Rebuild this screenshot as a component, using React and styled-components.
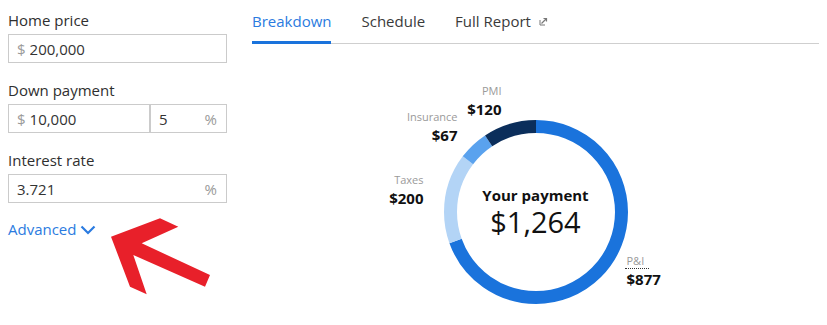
import React from "react";
import styled, { createGlobalStyle } from "styled-components";

const GlobalStyle = createGlobalStyle`
  body {
    margin: 0;
    background: #fff;
    font-family: "Open Sans", "Liberation Sans", Arial, sans-serif;
    color: #333;
  }
`;

const Page = styled.div`
  position: relative;
  display: flex;
  width: 827px;
  height: 325px;
  padding: 0 8px;
  box-sizing: border-box;
  gap: 25px;
  overflow: hidden;
`;

const LeftColumn = styled.div`
  width: 219px;
  flex: none;
  padding-top: 10px;
`;

const FieldLabel = styled.div`
  font-size: 15px;
  line-height: 20px;
  color: #2f2f2f;
  margin: ${(p) => (p.$first ? "0" : "17px")} 0 4px;
`;

const InputRow = styled.div`
  display: flex;
`;

const InputBox = styled.label`
  display: flex;
  align-items: center;
  box-sizing: border-box;
  width: ${(p) => p.$width}px;
  height: 29px;
  padding: 0 9px 0 8px;
  border: 1px solid #cbcbcb;
  font-size: 15px;
`;

const Affix = styled.span`
  color: #9a9a9a;
  margin-right: ${(p) => (p.$before ? "4px" : "0")};
`;

const ValueInput = styled.input`
  flex: 1;
  min-width: 0;
  border: none;
  outline: none;
  padding: 0;
  background: transparent;
  font: inherit;
  color: #333;
`;

const AdvancedLink = styled.a`
  display: inline-flex;
  align-items: center;
  gap: 4px;
  margin-top: 16px;
  font-size: 15px;
  line-height: 20px;
  color: #2b7be0;
  text-decoration: none;
  cursor: pointer;

  svg {
    margin-top: 2px;
  }
`;

const RightColumn = styled.div`
  flex: 1;
  display: flex;
  flex-direction: column;
`;

const TabBar = styled.div`
  display: flex;
  gap: 30px;
  height: 43px;
  border-bottom: 1px solid #cfcfcf;
`;

const Tab = styled.div`
  display: flex;
  align-items: flex-start;
  gap: 8px;
  padding: 11px 0 10px;
  margin-bottom: -1px;
  font-size: 15px;
  line-height: 20px;
  color: ${(p) => (p.$active ? "#2a7be0" : "#3a3a3a")};
  border-bottom: 3px solid ${(p) => (p.$active ? "#1a73dc" : "transparent")};
  cursor: pointer;

  svg {
    margin-top: 6px;
  }
`;

const ChartWrap = styled.div`
  position: relative;
  width: 184px;
  height: 184px;
  margin: 76px auto 0;
`;

const CenterText = styled.div`
  position: absolute;
  inset: 0;
  display: flex;
  flex-direction: column;
  align-items: center;
  justify-content: center;
  color: #111;
`;

const PaymentTitle = styled.div`
  font-size: 15px;
  line-height: 20px;
  font-weight: 700;
`;

const PaymentAmount = styled.div`
  font-size: 29px;
  line-height: 34px;
`;

const Callout = styled.div`
  position: absolute;
  top: ${(p) => p.$top}px;
  ${(p) => (p.$left != null ? `left: ${p.$left}px;` : `right: ${p.$right}px;`)}
  display: flex;
  flex-direction: column;
  align-items: ${(p) => (p.$left != null ? "flex-start" : "flex-end")};
  white-space: nowrap;
`;

const CalloutLabel = styled.span`
  font-size: 11px;
  line-height: 16px;
  color: #9a9a9a;
  ${(p) =>
    p.$dotted &&
    `
    margin-left: -2px;
    padding: 0 5px 0 2px;
    border-bottom: 1px dotted #333;
    line-height: 15px;
  `}
`;

const CalloutValue = styled.span`
  font-size: 15px;
  line-height: 20px;
  font-weight: 700;
  color: #111;
`;

const Arrow = styled.svg`
  position: absolute;
  left: 108px;
  top: 215px;
`;

const segments = [
  { name: "P&I", value: 877, color: "#1a73dc" },
  { name: "Taxes", value: 200, color: "#b3d4f6" },
  { name: "Insurance", value: 67, color: "#5aa2ee" },
  { name: "PMI", value: 120, color: "#0b2e5b" },
];

const Donut = () => {
  const r = 85.5;
  const c = 2 * Math.PI * r;
  const total = segments.reduce((s, x) => s + x.value, 0);
  let start = 0;
  return (
    <svg width="184" height="184" viewBox="0 0 184 184">
      <g transform="rotate(-90 92 92)">
        {segments.map((s) => {
          const len = (s.value / total) * c;
          const el = (
            <circle
              key={s.name}
              cx="92"
              cy="92"
              r={r}
              fill="none"
              stroke={s.color}
              strokeWidth="13"
              strokeDasharray={`${len} ${c - len}`}
              strokeDashoffset={-start}
            />
          );
          start += len;
          return el;
        })}
      </g>
    </svg>
  );
};

const Chevron = () => (
  <svg width="16" height="10" viewBox="0 0 16 10">
    <path d="M1.5 1.5 L8 8 L14.5 1.5" fill="none" stroke="#2b7be0" strokeWidth="2.2" />
  </svg>
);

const ExternalIcon = () => (
  <svg width="9" height="9" viewBox="0 0 9 9">
    <path d="M1 3 V8 H6" fill="none" stroke="#777" strokeWidth="1" />
    <path d="M2.5 6.5 L7.5 1.5 M4.5 1.5 H7.5 V4.5" fill="none" stroke="#777" strokeWidth="1.2" />
  </svg>
);

const Field = ({ prefix, suffix, value, width }) => (
  <InputBox $width={width}>
    {prefix && <Affix $before>{prefix}</Affix>}
    <ValueInput value={value} readOnly />
    {suffix && <Affix>{suffix}</Affix>}
  </InputBox>
);

export default function App() {
  return (
    <>
      <GlobalStyle />
      <Page>
        <LeftColumn>
          <FieldLabel $first>Home price</FieldLabel>
          <Field prefix="$" value="200,000" width={219} />

          <FieldLabel>Down payment</FieldLabel>
          <InputRow>
            <Field prefix="$" value="10,000" width={142} />
            <Field suffix="%" value="5" width={77} />
          </InputRow>

          <FieldLabel>Interest rate</FieldLabel>
          <Field suffix="%" value="3.721" width={219} />

          <AdvancedLink>
            Advanced
            <Chevron />
          </AdvancedLink>
        </LeftColumn>

        <RightColumn>
          <TabBar>
            <Tab $active>Breakdown</Tab>
            <Tab>Schedule</Tab>
            <Tab>
              Full Report
              <ExternalIcon />
            </Tab>
          </TabBar>

          <ChartWrap>
            <Donut />
            <CenterText>
              <PaymentTitle>Your payment</PaymentTitle>
              <PaymentAmount>$1,264</PaymentAmount>
            </CenterText>

            <Callout $top={-37} $right={126}>
              <CalloutLabel>PMI</CalloutLabel>
              <CalloutValue>$120</CalloutValue>
            </Callout>
            <Callout $top={-11} $right={170}>
              <CalloutLabel>Insurance</CalloutLabel>
              <CalloutValue>$67</CalloutValue>
            </Callout>
            <Callout $top={52} $right={204}>
              <CalloutLabel>Taxes</CalloutLabel>
              <CalloutValue>$200</CalloutValue>
            </Callout>
            <Callout $top={133} $left={183}>
              <CalloutLabel $dotted>P&amp;I</CalloutLabel>
              <CalloutValue>$877</CalloutValue>
            </Callout>
          </ChartWrap>
        </RightColumn>

        <Arrow width="106" height="84" viewBox="0 0 106 84">
          <polygon
            points="3,21.7 52,3.3 70.3,11.7 33.7,28.3 102,60 97,71.7 25.3,40 38.7,79.3 22,71.7"
            fill="#e8202a"
          />
        </Arrow>
      </Page>
    </>
  );
}
